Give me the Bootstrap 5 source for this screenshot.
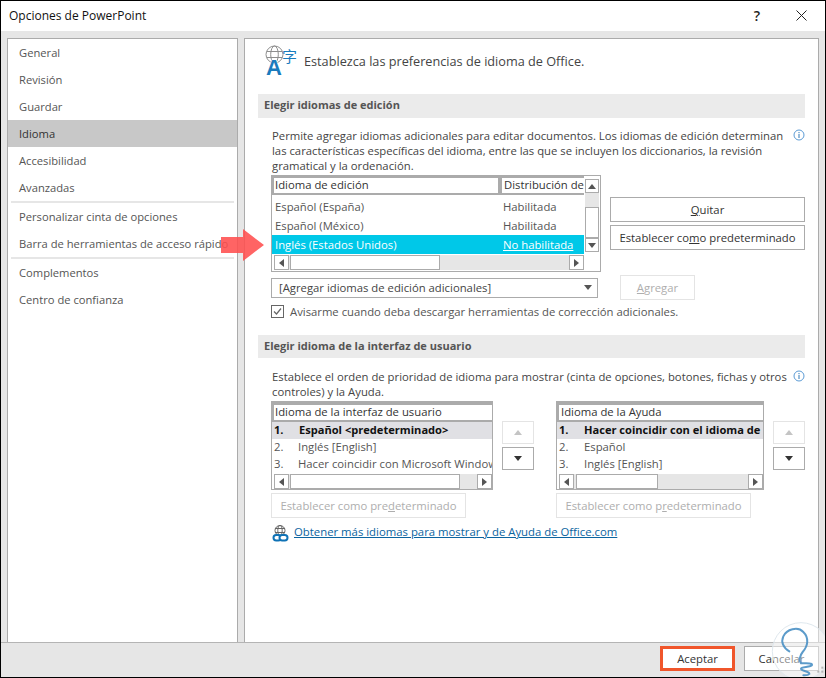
<!DOCTYPE html>
<html lang="es">
<head>
<meta charset="utf-8">
<title>Opciones de PowerPoint</title>
<link href="https://cdn.jsdelivr.net/npm/bootstrap@5.3.0/dist/css/bootstrap.min.css" rel="stylesheet">
<style>
html,body{margin:0;padding:0;background:#fff;}
body{font-family:"Open Sans","Liberation Sans",sans-serif;font-size:11.3px;line-height:15px;color:#444;}
.dlg{width:826px;height:678px;border:1px solid #000;display:flex;flex-direction:column;position:relative;overflow:hidden;background:#e6e6e6;}
.titlebar{height:30px;background:#fff;color:#111;font-size:12px;padding:0 0 2px 8px;flex:none;}
.tb-help{font-size:14px;color:#222;width:20px;text-align:center;margin-right:29px;font-weight:600;}
.tb-close{margin-right:18px;display:block;}
.panes{flex:1 1 auto;min-height:0;padding:7px 6px 0;gap:6px;}
.sidepane{width:231px;flex:none;background:#fff;border:1px solid #ababab;border-bottom:0;}
.mainpane{flex:1 1 auto;background:#fff;border:1px solid #ababab;border-bottom:0;padding:0 13px;min-width:0;}
.navitem.list-group-item{border:0;border-radius:0;height:27px;padding:6px 0 0 11px;background:transparent;color:#555;font-size:11.2px;line-height:16px;}
.navitem.active.list-group-item{background:#c8c8c8;color:#333;margin:0;}
.navsep{height:2px;background:#e6e6e6;margin:0 3px;}
.pagehead{height:55px;padding-left:8px;font-size:12.7px;color:#444;}
.pageicon{flex:none;margin-top:-11px;display:block;overflow:visible;}
.pagehead span{margin-left:6px;margin-top:-11px;}
.bandhd{background:#ebebeb;font-weight:700;color:#555;padding-left:6px;font-size:11px;}
.band-a{height:24px;line-height:22px;}
.band-b{height:23px;line-height:21px;margin-top:17px;}
.desc{padding-left:14px;white-space:nowrap;}
.desc-a{margin-top:10px;height:45px;}
.desc-b{margin-top:11px;height:30px;}
.infoic{flex:none;margin-top:1px;display:block;}
.ctrlarea{padding-left:13px;}
.lbox{border:1px solid #ababab;background:#fff;display:flex;flex:none;}
.lbox-a{width:330px;height:97px;margin-top:2px;}
.lbox-b{width:222px;height:89px;}
.lbox-c{width:208px;height:89px;}
.lmain{flex:1 1 auto;min-width:0;display:flex;flex-direction:column;overflow:hidden;}
.lhead{background:#ababab;display:flex;flex:none;white-space:nowrap;overflow:hidden;color:#333;}
.lhead-a{height:19px;padding:2px 0 2px 2px;gap:4px;margin-bottom:2px;}
.lhead-b{height:20px;padding:3px 0 2px 2px;}
.lcell{background:#fff;padding-left:1px;line-height:14px;overflow:hidden;flex:none;}
.lcell-1{width:224px;}
.lcell-2{width:90px;padding-left:2px;}
.lrow{white-space:nowrap;overflow:hidden;display:flex;flex:none;color:#555;}
.lrow-a{height:19px;line-height:19px;padding-left:3px;}
.lrow-a .n1{width:228px;flex:none;}
.lrow-hi{background:#00c8e8;color:#fff;}
.lrow-hi u{color:#fff;}
.lrow-b{height:17px;line-height:15px;padding-left:2px;}
.lrow-b .num{flex:none;width:24px;}
.lrow-sel{background:#e0e0e4;font-weight:700;color:#111;font-size:11.1px;}
.lrow-sel .num{width:25px;}
.lbox-c .lcell{padding-left:2px;}
.lbox-c .lrow-b .num{width:25px;}
.hscroll{height:15px;margin:1px 0 1px 2px;display:flex;background:#e6e6e6;flex:none;}
.sbtn{width:15px;height:15px;border:1px solid #ababab;background:#fff;display:flex;align-items:center;justify-content:center;flex:none;}
.thumb{border:1px solid #ababab;background:#fff;flex:none;margin-left:1px;}
.track{flex:1 1 auto;}
.lbox-a .thumb{width:150px;}
.lbox-b .thumb{width:170px;}
.lbox-c .thumb{width:82px;margin-left:2px;}
.hscroll .sbtn:last-child{margin-left:2px;}
.vscroll{width:16px;flex:none;padding:3px 1px 0 1px;display:flex;flex-direction:column;}
.vscroll .sbtn{width:14px;height:14px;}
.vtrack{height:14px;background:#e6e6e6;}
.vthumb{height:31px;border:1px solid #ababab;background:#fff;}
.tri-l,.tri-r,.tri-u,.tri-d{width:0;height:0;display:block;}
.tri-l{border:4px solid transparent;border-left:0;border-right:5px solid #555;}
.tri-r{border:4px solid transparent;border-right:0;border-left:5px solid #555;}
.tri-u{border:4px solid transparent;border-top:0;border-bottom:5px solid #555;}
.tri-d{border:4px solid transparent;border-bottom:0;border-top:5px solid #555;}
.tri-off{border-bottom-color:#c4c4c4;}
.tri-on{border-top-color:#333;}
.wbtn.btn{border:1px solid #ababab;border-radius:0;background:#fff;color:#333;font-size:11.3px;line-height:15px;padding:0;white-space:nowrap;--bs-btn-hover-bg:#fff;}
.sidebtns{width:195px;margin:24px 0 0 9px;gap:3px;}
.sidebtns .wbtn{height:25px;}
.wbtn.btn:disabled{border-color:#e4e4e4;color:#aeaeae;opacity:1;background:#fff;}
.comborow{margin-top:3px;height:25px;}
.combo{width:327px;height:20px;border:1px solid #ababab;padding:0 5px 0 7px;color:#444;line-height:18px;}
.combo-arrow{border:4px solid transparent;border-bottom:0;border-top:5px solid #555;}
.addbtn.wbtn.btn{width:75px;height:25px;margin-left:22px;}
.checkrow{margin-top:5px;height:13px;line-height:13px;gap:6px;color:#555;}
.chk{width:13px;height:13px;border:1px solid #666;display:flex;flex:none;background:#fff;}
.langgroups{margin-top:2px;padding-left:13px;}
.lg1{width:285px;flex:none;}
.updown{margin:20px 0 0 9px;gap:3px;width:32px;flex:none;}
.updown .wbtn{height:23px;width:32px;display:flex;align-items:center;justify-content:center;}
.estbtn.wbtn.btn{margin-top:3px;height:25px;display:block;width:195px;}
.moreline{margin-top:7px;padding-left:14px;gap:5px;height:16px;line-height:14px;}
.morelink{color:#0b64a0;text-decoration:underline;font-size:11.35px;margin-top:-2px;}
.dfoot{height:35px;flex:none;border-top:1px solid #b4b4b4;background:#e6e6e6;padding:3px 6px 0 0;gap:9px;justify-content:flex-end;}
.dfoot .wbtn{width:75px;height:25px;}
.okbtn.wbtn.btn{border:3px solid #f0562b;line-height:19px;}
.annot-arrow{position:absolute;left:220px;top:228px;width:44px;height:32px;display:block;}
.wmark{position:absolute;right:0;bottom:0;width:59px;height:55px;display:block;}
</style>
</head>
<body>
<div class="dlg">
  <div class="titlebar d-flex align-items-center">
    <span class="flex-grow-1">Opciones de PowerPoint</span>
    <span class="tb-help">?</span>
    <svg class="tb-close" width="11" height="11" viewBox="0 0 11 11"><path d="M.5.5l10 10M10.5.5l-10 10" stroke="#222" stroke-width="1" fill="none"/></svg>
  </div>
  <div class="panes d-flex">
    <div class="sidepane">
      <div class="list-group list-group-flush">
        <div class="list-group-item navitem">General</div>
        <div class="list-group-item navitem">Revisión</div>
        <div class="list-group-item navitem">Guardar</div>
        <div class="list-group-item navitem active">Idioma</div>
        <div class="list-group-item navitem">Accesibilidad</div>
        <div class="list-group-item navitem">Avanzadas</div>
        <div class="navsep"></div>
        <div class="list-group-item navitem">Personalizar cinta de opciones</div>
        <div class="list-group-item navitem">Barra de herramientas de acceso rápido</div>
        <div class="navsep"></div>
        <div class="list-group-item navitem">Complementos</div>
        <div class="list-group-item navitem">Centro de confianza</div>
      </div>
    </div>
    <div class="mainpane">
      <div class="pagehead d-flex align-items-center">
        <svg class="pageicon" width="32" height="32" viewBox="0 0 32 32">
          <g fill="none" stroke="#8e8e8e" stroke-width="1"><circle cx="8.5" cy="9.5" r="8.5"/><ellipse cx="8.5" cy="9.5" rx="3.8" ry="8.5"/><path d="M1 6.5h15M1 12.5h15"/></g>
          <text x="0" y="30" font-family="Liberation Sans,sans-serif" font-weight="700" font-size="22" fill="#1a7bbd" stroke="#fff" stroke-width="1.2" paint-order="stroke">A</text>
          <text x="16" y="17" font-family="Noto Sans CJK SC,sans-serif" font-size="15" fill="#1a7bbd">字</text>
        </svg>
        <span>Establezca las preferencias de idioma de Office.</span>
      </div>
      <div class="bandhd band-a">Elegir idiomas de edición</div>
      <div class="desc desc-a d-flex justify-content-between">
        <div>Permite agregar idiomas adicionales para editar documentos. Los idiomas de edición determinan<br>las características específicas del idioma, entre las que se incluyen los diccionarios, la revisión<br>gramatical y la ordenación.</div>
        <svg class="infoic" width="12" height="12" viewBox="0 0 12 12"><circle cx="6" cy="6" r="5" fill="none" stroke="#5b9bd5"/><path d="M6 5v4M6 3v1.2" stroke="#2f78b7" stroke-width="1"/></svg>
      </div>
      <div class="ctrlarea">
        <div class="d-flex">
          <div class="lbox lbox-a">
            <div class="lmain">
              <div class="lhead lhead-a">
                <div class="lcell lcell-1">Idioma de edición</div>
                <div class="lcell lcell-2">Distribución de teclado</div>
              </div>
              <div class="lrow lrow-a"><span class="n1">Español (España)</span><span>Habilitada</span></div>
              <div class="lrow lrow-a"><span class="n1">Español (México)</span><span>Habilitada</span></div>
              <div class="lrow lrow-a lrow-hi"><span class="n1">Inglés (Estados Unidos)</span><u>No habilitada</u></div>
              <div class="hscroll">
                <div class="sbtn"><i class="tri-l"></i></div>
                <div class="thumb"></div>
                <div class="track"></div>
                <div class="sbtn"><i class="tri-r"></i></div>
              </div>
            </div>
            <div class="vscroll">
              <div class="sbtn"><i class="tri-u"></i></div>
              <div class="vtrack"></div>
              <div class="vthumb"></div>
              <div class="sbtn"><i class="tri-d"></i></div>
            </div>
          </div>
          <div class="sidebtns d-flex flex-column">
            <button class="btn wbtn" type="button"><u>Q</u>uitar</button>
            <button class="btn wbtn" type="button">Establecer co<u>m</u>o predeterminado</button>
          </div>
        </div>
        <div class="comborow d-flex align-items-center">
          <div class="combo d-flex align-items-center justify-content-between">
            <span>[Agregar idiomas de edición adicionales]</span><i class="combo-arrow"></i>
          </div>
          <button class="btn wbtn addbtn" type="button" disabled><u>A</u>gregar</button>
        </div>
        <div class="checkrow d-flex">
          <span class="chk"><svg width="11" height="11" viewBox="0 0 11 11"><path d="M2 5.5l2.5 2.5L9 2.5" fill="none" stroke="#666" stroke-width="1.2"/></svg></span>
          <span>Avisarme cuando deba descargar herramientas de corrección adicionales.</span>
        </div>
      </div>
      <div class="bandhd band-b">Elegir idioma de la interfaz de usuario</div>
      <div class="desc desc-b d-flex justify-content-between">
        <div>Establece el orden de prioridad de idioma para mostrar (cinta de opciones, botones, fichas y otros<br>controles) y la Ayuda.</div>
        <svg class="infoic" width="12" height="12" viewBox="0 0 12 12"><circle cx="6" cy="6" r="5" fill="none" stroke="#5b9bd5"/><path d="M6 5v4M6 3v1.2" stroke="#2f78b7" stroke-width="1"/></svg>
      </div>
      <div class="langgroups d-flex">
        <div class="lg1">
          <div class="d-flex">
            <div class="lbox lbox-b">
              <div class="lmain">
                <div class="lhead lhead-b"><div class="lcell flex-grow-1">Idioma de la interfaz de usuario</div></div>
                <div class="lrow lrow-b lrow-sel"><span class="num">1.</span><span>Español &lt;predeterminado&gt;</span></div>
                <div class="lrow lrow-b"><span class="num">2.</span><span>Inglés [English]</span></div>
                <div class="lrow lrow-b"><span class="num">3.</span><span>Hacer coincidir con Microsoft Windows</span></div>
                <div class="hscroll">
                  <div class="sbtn"><i class="tri-l"></i></div>
                  <div class="thumb"></div>
                  <div class="track"></div>
                  <div class="sbtn"><i class="tri-r"></i></div>
                </div>
              </div>
            </div>
            <div class="updown d-flex flex-column">
              <button class="btn wbtn" type="button" disabled><i class="tri-u tri-off"></i></button>
              <button class="btn wbtn" type="button"><i class="tri-d tri-on"></i></button>
            </div>
          </div>
          <button class="btn wbtn estbtn" type="button" disabled>Establecer como pre<u>d</u>eterminado</button>
        </div>
        <div class="flex-grow-1">
          <div class="d-flex">
            <div class="lbox lbox-c">
              <div class="lmain">
                <div class="lhead lhead-b"><div class="lcell flex-grow-1">Idioma de la Ayuda</div></div>
                <div class="lrow lrow-b lrow-sel"><span class="num">1.</span><span>Hacer coincidir con el idioma de interfaz</span></div>
                <div class="lrow lrow-b"><span class="num">2.</span><span>Español</span></div>
                <div class="lrow lrow-b"><span class="num">3.</span><span>Inglés [English]</span></div>
                <div class="hscroll">
                  <div class="sbtn"><i class="tri-l"></i></div>
                  <div class="thumb"></div>
                  <div class="track"></div>
                  <div class="sbtn"><i class="tri-r"></i></div>
                </div>
              </div>
            </div>
            <div class="updown d-flex flex-column">
              <button class="btn wbtn" type="button" disabled><i class="tri-u tri-off"></i></button>
              <button class="btn wbtn" type="button"><i class="tri-d tri-on"></i></button>
            </div>
          </div>
          <button class="btn wbtn estbtn" type="button" disabled>Establecer como p<u>r</u>edeterminado</button>
        </div>
      </div>
      <div class="moreline d-flex align-items-center">
        <svg width="17" height="17" viewBox="0 0 17 17" style="flex:none">
          <g fill="none" stroke="#666" stroke-width="1"><circle cx="8" cy="5.5" r="5"/><ellipse cx="8" cy="5.5" rx="2.2" ry="5"/><path d="M3 3.5h10M3 7.5h10"/></g>
          <g fill="#fff" stroke="#0f72b5" stroke-width="2"><rect x="1.5" y="10" width="7.5" height="5.5" rx="2.7"/><rect x="7.5" y="10" width="8" height="5.5" rx="2.7"/></g>
        </svg>
        <a class="morelink" href="#">Obtener más idiomas para mostrar y de Ayuda de Office.com</a>
      </div>
    </div>
  </div>
  <div class="dfoot d-flex">
    <button class="btn wbtn okbtn" type="button">Aceptar</button>
    <button class="btn wbtn" type="button">Cancelar</button>
  </div>
  <svg class="annot-arrow" viewBox="0 0 44 32"><path d="M0 8h22V0l21 16-21 16v-8H0z" fill="#ff4f4f" fill-opacity=".88"/></svg>
  <svg class="wmark" viewBox="60 12 177 165">
    <circle cx="165" cy="100" r="86" fill="#fff" fill-opacity=".45" stroke="#dfe8ee" stroke-width="3"/>
    <path d="M130 100C112 90 104 72 112 55 122 34 155 24 172 42 190 60 186 84 170 102 161 113 158 128 165 136 178 136 200 134 198 141 195 148 165 146 165 152 167 160 192 160 190 168 186 173 178 172 172 172" fill="none" stroke="#4a90c4" stroke-opacity=".9" stroke-width="6" stroke-linecap="round"/>
    <g fill="#b5b5b5"><rect x="226" y="146" width="6" height="6"/><rect x="214" y="158" width="6" height="6"/><rect x="226" y="158" width="6" height="6"/></g>
  </svg>
</div>
<script src="https://cdn.jsdelivr.net/npm/bootstrap@5.3.0/dist/js/bootstrap.bundle.min.js"></script>
</body>
</html>
